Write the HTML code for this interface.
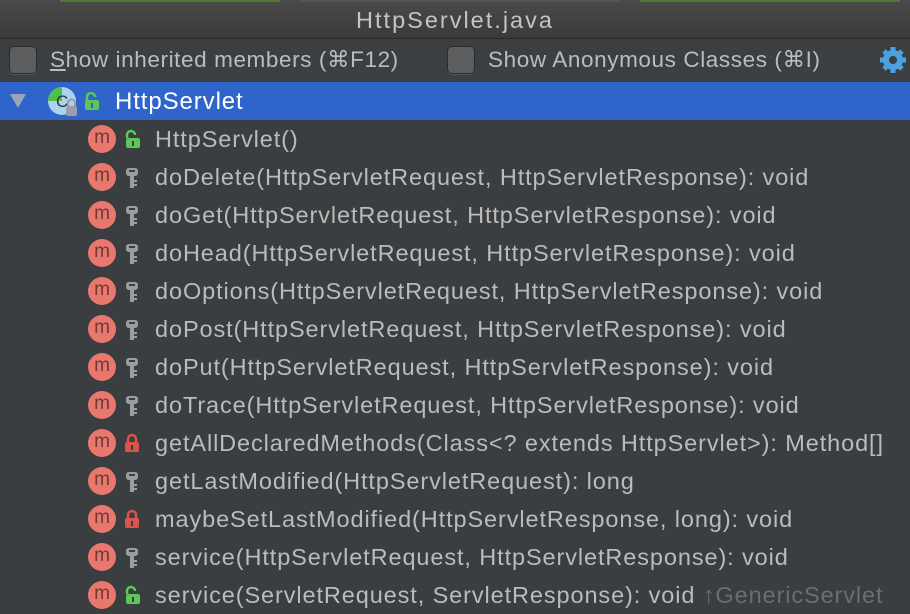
<!DOCTYPE html>
<html><head><meta charset="utf-8"><style>
*{margin:0;padding:0;box-sizing:border-box}
body{width:910px;height:614px;overflow:hidden;background:#3b3e40;font-family:"Liberation Sans","DejaVu Sans",sans-serif;position:relative}
.title{position:absolute;left:0;top:0;width:910px;height:39px;background:linear-gradient(#4a4a4a,#3a3a3a);border-bottom:1px solid #2a2a2a}
.title .t{position:absolute;left:0;width:910px;top:7px;text-align:center;color:#c4c4c4;font-size:23.5px;letter-spacing:2px}
.strip{position:absolute;top:0;height:2px;background:#4f7a35}
.tb{position:absolute;top:39px;left:0;width:910px;height:43px;background:#3c3f41}
.cb{position:absolute;top:7px;width:28px;height:28px;border-radius:5px;background:#5b5d5f;border:1px solid #2b2b2b;box-shadow:0 1px 0 #555}
.lbl{position:absolute;top:8px;color:#bcbcbc;font-size:22.5px;letter-spacing:0.6px;white-space:nowrap}
.row{position:absolute;left:0;width:910px;height:38px}
.sel{background:#2f65ca}
.txt{position:absolute;left:155px;top:6px;color:#bbbbbb;font-size:23.5px;letter-spacing:0.9px;white-space:nowrap}
.m{position:absolute;left:88px;top:5px;width:28px;height:28px;border-radius:50%;background:#e8786e;color:#6e3a36;font-size:19px;text-align:center;line-height:26px}
.ic{position:absolute;left:124px;top:9px}
</style></head><body>
<div class="title">
<div class="strip" style="left:60px;width:220px"></div>
<div class="strip" style="left:300px;width:320px;background:#555"></div>
<div class="strip" style="left:640px;width:260px"></div>
<div class="t">HttpServlet.java</div></div>
<div class="tb">
<div class="cb" style="left:9px"></div>
<div class="lbl" style="left:50px"><u>S</u>how inherited members (⌘F12)</div>
<div class="cb" style="left:447px"></div>
<div class="lbl" style="left:488px">Show Anonymous Classes (⌘I)</div>
<svg style="position:absolute;left:878px;top:6px" width="30" height="30" viewBox="0 0 30 30"><g fill="#4aa3e0"><circle cx="15" cy="15" r="10"/><g stroke="#4aa3e0" stroke-width="5"><path d="M15 2v26M2 15h26M6 6l18 18M24 6L6 24"/></g></g><circle cx="15" cy="15" r="4" fill="#3c3f41"/></svg>
</div>
<div class="row sel" style="top:82px">
<svg style="position:absolute;left:10px;top:12px" width="16" height="14"><path d="M0 0h16L8 14z" fill="#9aa6b8"/></svg>
<svg style="position:absolute;left:47px;top:4px" width="34" height="32" viewBox="0 0 34 32"><circle cx="15" cy="15" r="14" fill="#a9d3ef"/><path d="M15 15V1A14 14 0 0 0 1 15z" fill="#4fc04a"/><text x="9" y="21" font-size="17" fill="#333" font-family="Liberation Sans">C</text><rect x="19" y="20" width="11" height="10" rx="2" fill="#9a9ea6"/><path d="M21 20v-3a3.5 3.5 0 0 1 7 0v3" stroke="#9a9ea6" stroke-width="2" fill="none"/></svg>
<svg style="position:absolute;left:84px;top:10px" width="16" height="18" viewBox="0 0 16 18"><path d="M3 8V5a4 4 0 0 1 8 0" stroke="#5dc55a" stroke-width="2.5" fill="none"/><rect x="1" y="8" width="14" height="10" rx="2" fill="#5dc55a"/><rect x="7" y="11" width="2" height="5" fill="#2f65ca"/></svg>
<div class="txt" style="left:115px;color:#fff;font-size:24px">HttpServlet</div>
</div>
<div id="rows"></div>
<script>
var R=[["g","HttpServlet()"],["k","doDelete(HttpServletRequest, HttpServletResponse): void"],["k","doGet(HttpServletRequest, HttpServletResponse): void"],["k","doHead(HttpServletRequest, HttpServletResponse): void"],["k","doOptions(HttpServletRequest, HttpServletResponse): void"],["k","doPost(HttpServletRequest, HttpServletResponse): void"],["k","doPut(HttpServletRequest, HttpServletResponse): void"],["k","doTrace(HttpServletRequest, HttpServletResponse): void"],["r","getAllDeclaredMethods(Class&lt;? extends HttpServlet&gt;): Method[]"],["k","getLastModified(HttpServletRequest): long"],["r","maybeSetLastModified(HttpServletResponse, long): void"],["k","service(HttpServletRequest, HttpServletResponse): void"],["g","service(ServletRequest, ServletResponse): void <span style='color:#6b6e70'>↑GenericServlet</span>"]];
var ic={g:'<svg class="ic" width="16" height="20" viewBox="0 0 16 20"><path d="M3 9V6a4 4 0 0 1 8 0" stroke="#5dc55a" stroke-width="2.5" fill="none"/><rect x="2" y="9" width="14" height="10" rx="2" fill="#5dc55a"/><rect x="8" y="12" width="2" height="5" fill="#3b3e40"/></svg>',
r:'<svg class="ic" width="16" height="20" viewBox="0 0 16 20"><path d="M4 9V6a4 4 0 0 1 8 0v3" stroke="#d8554c" stroke-width="2.5" fill="none"/><rect x="1" y="9" width="14" height="10" rx="2" fill="#d8554c"/><rect x="7" y="12" width="2" height="5" fill="#3b3e40"/></svg>',
k:'<svg class="ic" width="16" height="22" viewBox="0 0 16 22"><rect x="2" y="1" width="12" height="8" rx="3" fill="#9a9ea2"/><rect x="5" y="3" width="6" height="2" fill="#3b3e40"/><path d="M6 9h4v12H6z" fill="#9a9ea2"/><path d="M10 13h3v2h-3zM10 17h3v2h-3z" fill="#9a9ea2"/></svg>'};
var h='';R.forEach(function(r,i){h+='<div class="row" style="top:'+(120+i*38)+'px"><div class="m">m</div>'+ic[r[0]]+'<div class="txt">'+r[1]+'</div></div>'});
document.getElementById('rows').innerHTML=h;
</script>
</body></html>
